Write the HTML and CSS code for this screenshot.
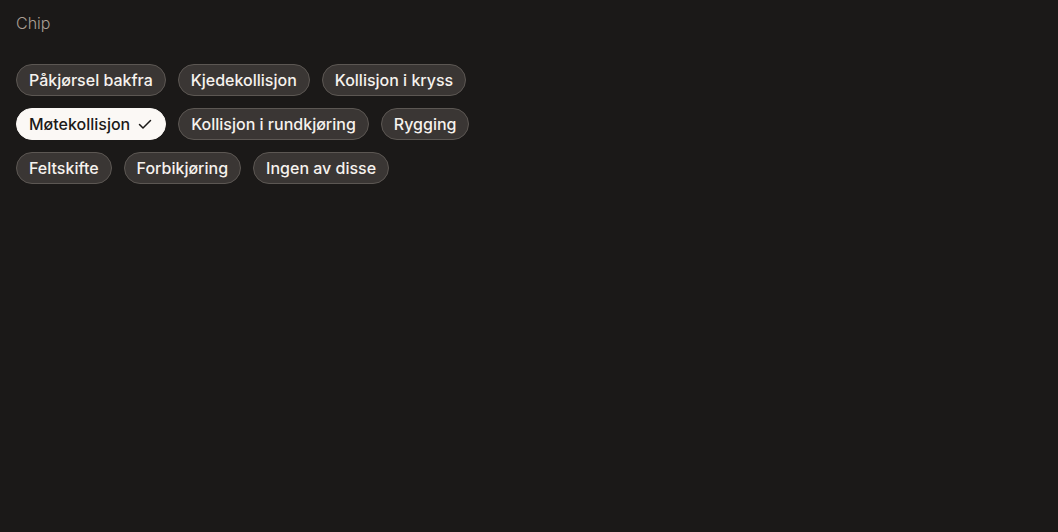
FILE: index.html
```html
<!DOCTYPE html>
<html lang="no">
<head>
<meta charset="utf-8">
<link rel="stylesheet" href="styles.css">
</head>
<body>
<main class="page">
  <div class="title">Chip</div>
  <div class="chips">
    <button class="chip">Påkjørsel bakfra</button>
    <button class="chip">Kjedekollisjon</button>
    <button class="chip">Kollisjon i kryss</button>
    <button class="chip selected">Møtekollisjon <svg class="check" width="16" height="16" viewBox="0 0 16 16"><path d="M2.5 8.5l3.5 3.5 7.5-7.5" fill="none" stroke="currentColor" stroke-width="1.5" stroke-linecap="round" stroke-linejoin="round"/></svg></button>
    <button class="chip">Kollisjon i rundkjøring</button>
    <button class="chip">Rygging</button>
    <button class="chip">Feltskifte</button>
    <button class="chip">Forbikjøring</button>
    <button class="chip">Ingen av disse</button>
  </div>
</main>
</body>
</html>
```

FILE: styles.css
```css
html, body {
  margin: 0;
  padding: 0;
  background: #1b1918;
  height: 100%;
}
.page {
  padding: 12px 16px;
  font-family: Inter, "Liberation Sans", sans-serif;
  color: #f6f2ee;
}
.title {
  font-size: 16px;
  line-height: 22px;
  color: #aa9f94;
  font-weight: 300;
}
.chips {
  margin-top: 30px;
  display: flex;
  flex-wrap: wrap;
  gap: 12px;
  width: 460px;
}
.chip {
  display: inline-flex;
  align-items: center;
  gap: 7px;
  height: 32px;
  box-sizing: border-box;
  padding: 0 12px;
  border-radius: 16px;
  border: 1px solid #5c5753;
  background: #3a3634;
  color: #f6f2ee;
  font-family: inherit;
  font-size: 16px;
  font-weight: 500;
  letter-spacing: 0;
  cursor: pointer;
}
.chip.selected {
  background: #fbf8f5;
  border-color: #fbf8f5;
  color: #1b1918;
}
.check {
  display: block;
}
```
